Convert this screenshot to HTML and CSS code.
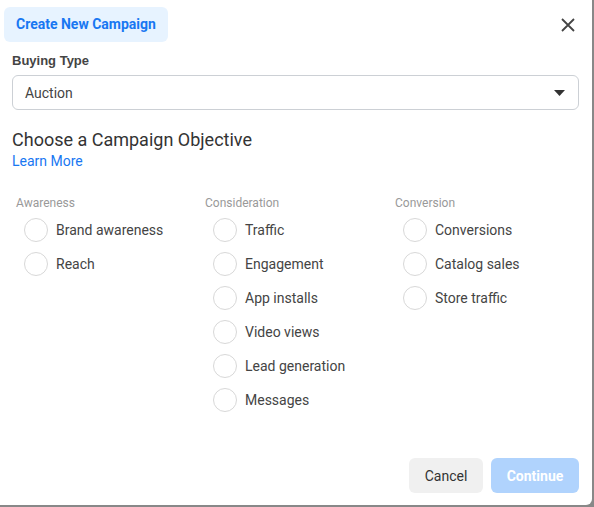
FILE: index.html
```html
<!DOCTYPE html>
<html lang="en">
<head>
    <meta charset="utf-8">
    <title>Create New Campaign</title>
    <link rel="stylesheet" href="styles.css">
</head>
<body>
    <div class="dialog">
        <div class="dialog_head">
            <div class="tab">Create New Campaign</div>
            <button class="close" aria-label="Close">
                <svg width="14" height="14" viewBox="0 0 14 14"><path d="M1 1L13 13M13 1L1 13" stroke="#444" stroke-width="1.8" fill="none"/></svg>
            </button>
        </div>

        <label class="field_label">Buying Type</label>
        <div class="select">
            <span>Auction</span>
            <svg width="11" height="6" viewBox="0 0 11 6"><path d="M0 0H11L5.5 6Z" fill="#333"/></svg>
        </div>

        <h2 class="objective_title">Choose a Campaign Objective</h2>
        <a class="learn_more" href="#">Learn More</a>

        <div class="objectives">
            <div class="group">
                <div class="group_title">Awareness</div>
                <div class="option"><span class="radio"></span>Brand awareness</div>
                <div class="option"><span class="radio"></span>Reach</div>
            </div>
            <div class="group">
                <div class="group_title">Consideration</div>
                <div class="option"><span class="radio"></span>Traffic</div>
                <div class="option"><span class="radio"></span>Engagement</div>
                <div class="option"><span class="radio"></span>App installs</div>
                <div class="option"><span class="radio"></span>Video views</div>
                <div class="option"><span class="radio"></span>Lead generation</div>
                <div class="option"><span class="radio"></span>Messages</div>
            </div>
            <div class="group">
                <div class="group_title">Conversion</div>
                <div class="option"><span class="radio"></span>Conversions</div>
                <div class="option"><span class="radio"></span>Catalog sales</div>
                <div class="option"><span class="radio"></span>Store traffic</div>
            </div>
        </div>

        <div class="dialog_foot">
            <button class="btn btn_cancel">Cancel</button>
            <button class="btn btn_continue">Continue</button>
        </div>
    </div>
</body>
</html>
```

FILE: styles.css
```css
body {
    margin: 0;
    background-color: #888;
    font-family: Roboto, "Liberation Sans", Arial, sans-serif;
}
.dialog {
    width: 592px;
    height: 505px;
    box-sizing: border-box;
    background-color: #fff;
    border-bottom-right-radius: 6px;
    padding: 7px 13px 0 12px;
    display: flex;
    flex-direction: column;
}
.dialog_head {
    display: flex;
    justify-content: space-between;
    align-items: center;
    margin-left: -8px;
}
.tab {
    background-color: #e7f3ff;
    color: #1877f2;
    font-family: Roboto, "Liberation Sans", Arial, sans-serif;
    font-weight: bold;
    font-size: 14px;
    height: 35px;
    line-height: 35px;
    padding: 0 12px;
    border-radius: 6px;
}
.close {
    border: none;
    background: none;
    padding: 0;
    margin-right: 4px;
    width: 14px;
    height: 14px;
    display: flex;
}
.field_label {
    display: block;
    font-family: "Liberation Sans", Arial, sans-serif;
    font-weight: bold;
    font-size: 13px;
    color: #444;
    margin-top: 11px;
}
.select {
    margin-top: 7px;
    height: 35px;
    box-sizing: border-box;
    border: 1px solid #ccd0d5;
    border-radius: 6px;
    display: flex;
    align-items: center;
    justify-content: space-between;
    padding: 0 13px 0 12px;
    font-size: 14px;
    color: #444;
}
.objective_title {
    margin: 18px 0 0;
    font-size: 18px;
    font-weight: normal;
    color: #333;
    line-height: 24px;
}
.learn_more {
    display: block;
    color: #1877f2;
    text-decoration: none;
    font-size: 14px;
    line-height: 18px;
}
.objectives {
    display: grid;
    grid-template-columns: 189px 190px 1fr;
    margin-top: 26px;
    padding-left: 4px;
}
.group_title {
    font-size: 12px;
    color: #999;
    line-height: 14px;
    margin-bottom: 3px;
}
.option {
    display: flex;
    align-items: center;
    gap: 8px;
    height: 34px;
    padding-left: 8px;
    font-size: 14px;
    color: #444;
}
.radio {
    width: 22px;
    height: 22px;
    border: 1px solid #d8d8d8;
    border-radius: 50%;
    flex-shrink: 0;
}
.dialog_foot {
    margin-top: auto;
    margin-bottom: 12px;
    display: flex;
    justify-content: flex-end;
    gap: 8px;
}
.btn {
    height: 35px;
    border: none;
    border-radius: 6px;
    font-size: 14px;
    font-family: Roboto, "Liberation Sans", Arial, sans-serif;
}
.btn_cancel {
    width: 74px;
    background-color: #f0f0f0;
    color: #333;
}
.btn_continue {
    width: 88px;
    background-color: #b0d3fd;
    color: #fff;
    font-weight: bold;
}
```
